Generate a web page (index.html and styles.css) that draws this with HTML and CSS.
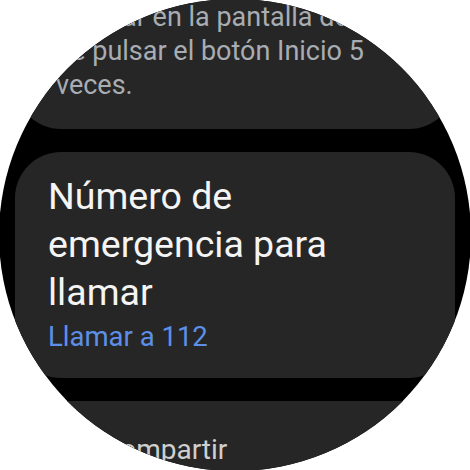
FILE: index.html
```html
<!DOCTYPE html>
<html lang="es">
  <head>
    <meta charset="UTF-8" />
    <meta name="viewport" content="width=device-width, initial-scale=1.0" />
    <link rel="stylesheet" href="styles.css">
    <title>SOS de emergencia</title>
  </head>
  <body>
    <div class="screen">
      <div class="list">
        <section class="card card-info">
          <p class="info">
            al tocar en la pantalla de SOS<br>
            de pulsar el botón Inicio 5<br>
            veces.
          </p>
        </section>
        <section class="card card-number">
          <h2 class="title">Número de emergencia para llamar</h2>
          <p class="subtitle">Llamar a 112</p>
        </section>
        <section class="card card-action">
          <svg class="icon" viewBox="0 0 24 24" width="32" height="32">
            <circle cx="18" cy="5" r="3" fill="currentColor" />
            <circle cx="6" cy="12" r="3" fill="currentColor" />
            <circle cx="18" cy="19" r="3" fill="currentColor" />
            <path d="M8.6 13.5l6.8 4M15.4 6.5l-6.8 4" stroke="currentColor" stroke-width="2" />
          </svg>
          <span class="action-label">Compartir</span>
        </section>
      </div>
    </div>
  </body>
</html>
```

FILE: styles.css
```css
* {
  margin: 0;
  padding: 0;
  box-sizing: border-box;
}
body {
  background: #ffffff;
  font-family: Roboto, "Liberation Sans", sans-serif;
}
.screen {
  width: 470px;
  height: 470px;
  overflow: hidden;
  background: #000000;
  clip-path: circle(236px at 50% 50%);
}
.list {
  display: flex;
  flex-flow: column;
  gap: 23px;
  padding: 0 15px;
  margin-top: -24px;
}
.card {
  background: #262626;
  border-radius: 46px;
}
.card-info {
  padding: 24px 41px 27px;
}
.info {
  font-size: 27px;
  line-height: 34px;
  color: #a8adb3;
  white-space: nowrap;
}
.card-number {
  padding: 20px 40px 24px 33px;
}
.title {
  font-size: 37.5px;
  line-height: 48px;
  font-weight: 400;
  color: #f4f4f4;
}
.subtitle {
  margin-top: 4px;
  font-size: 27.5px;
  line-height: 34px;
  color: #5d8fe8;
}
.card-action {
  display: flex;
  align-items: center;
  gap: 14px;
  padding: 32px 33px 30px 41px;
  color: #cfcfcf;
}
.action-label {
  font-size: 28px;
  line-height: 34px;
}
```
